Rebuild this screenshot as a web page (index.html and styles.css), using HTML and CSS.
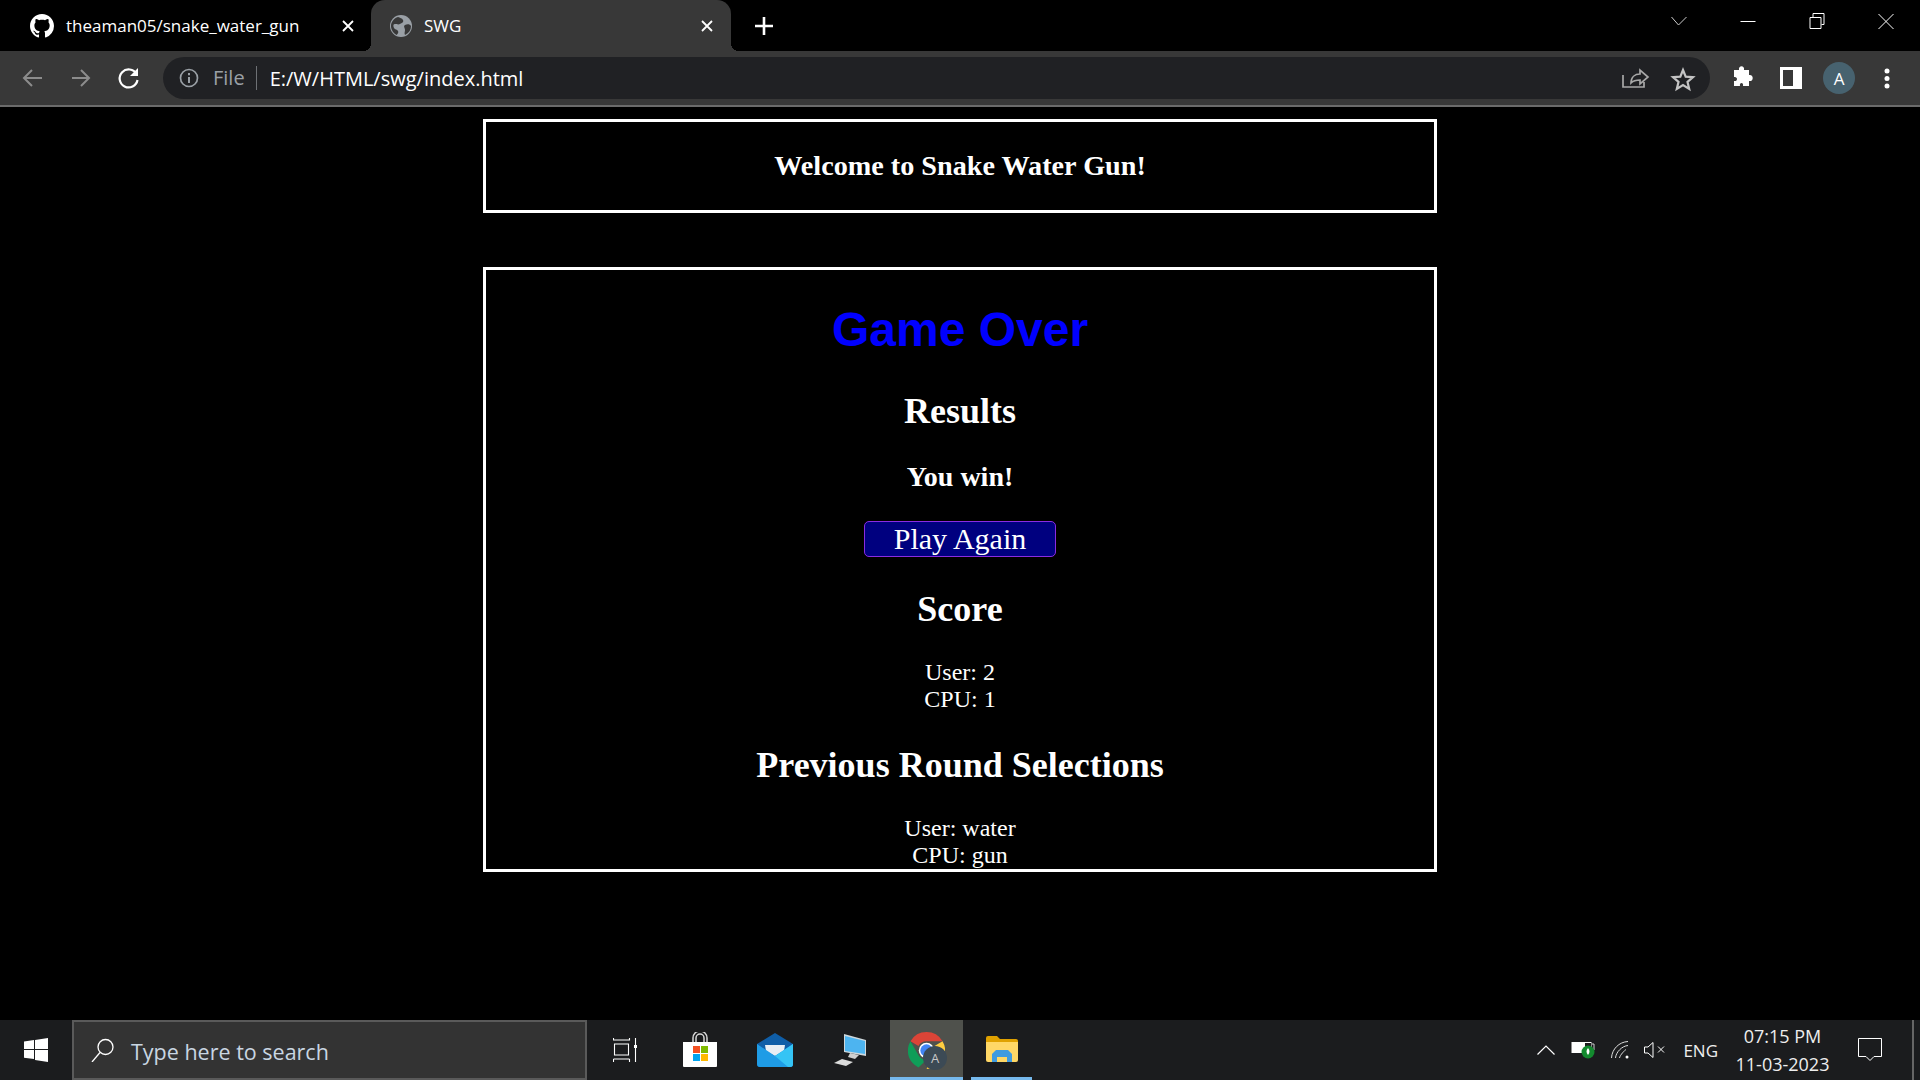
FILE: index.html
```html
<!DOCTYPE html>
<html lang="en">
<head>
    <meta charset="UTF-8">
    <meta name="viewport" content="width=device-width, initial-scale=1.0">
    <title>SWG</title>
    <link rel="stylesheet" href="styles.css">
</head>
<body>
    <div class="tab-strip">
        <div class="tab">
            <svg class="tab-favicon" viewBox="0 0 16 16"><path fill="#fff" d="M8 0C3.58 0 0 3.58 0 8c0 3.54 2.29 6.53 5.47 7.59.4.07.55-.17.55-.38 0-.19-.01-.82-.01-1.49-2.01.37-2.53-.49-2.69-.94-.09-.23-.48-.94-.82-1.13-.28-.15-.68-.52-.01-.53.63-.01 1.08.58 1.23.82.72 1.21 1.87.87 2.33.66.07-.52.28-.87.51-1.07-1.78-.2-3.64-.89-3.64-3.95 0-.87.31-1.59.82-2.15-.08-.2-.36-1.02.08-2.12 0 0 .67-.21 2.2.82.64-.18 1.32-.27 2-.27.68 0 1.36.09 2 .27 1.53-1.04 2.2-.82 2.2-.82.44 1.1.16 1.92.08 2.12.51.56.82 1.27.82 2.15 0 3.07-1.87 3.75-3.65 3.95.29.25.54.73.54 1.48 0 1.07-.01 1.93-.01 2.2 0 .21.15.46.55.38A8.013 8.013 0 0016 8c0-4.42-3.58-8-8-8z"/></svg>
            <span class="tab-title">theaman05/snake_water_gun</span>
            <svg class="tab-close" viewBox="0 0 12 12"><path d="M1 1l10 10M11 1L1 11" stroke="#fff" stroke-width="1.8"/></svg>
        </div>
        <div class="tab tab-active">
            <svg class="tab-favicon" viewBox="0 0 22 22"><circle cx="11" cy="11" r="11" fill="#9aa0a6"/><path fill="#383838" d="M8 2c2 1 4 1 5 3s-1 3-3 4-3 0-5 0-2 2-1 4 3 1 4 3-1 3-1 4C4 19 1 15 1 11 1 7 4 3 8 2zM15 10c2-1 5-1 6 1 0 4-2 7-6 9-1-2 0-3 0-5s-2-4 0-5z"/></svg>
            <span class="tab-title">SWG</span>
            <svg class="tab-close" viewBox="0 0 12 12"><path d="M1 1l10 10M11 1L1 11" stroke="#fff" stroke-width="1.8"/></svg>
        </div>
        <svg class="new-tab" viewBox="0 0 18 18"><path d="M9 0v18M0 9h18" stroke="#fff" stroke-width="2.6"/></svg>
        <div class="window-controls">
            <svg class="win-btn" viewBox="0 0 68 51"><path d="M27 17l7 8 8-8" fill="none" stroke="#ccc"/></svg>
            <svg class="win-btn" viewBox="0 0 68 51"><path d="M27 21.5h15" stroke="#fff"/></svg>
            <svg class="win-btn" viewBox="0 0 68 51"><path d="M27.5 17.5h11v11h-11zM30.5 17v-3.500h11v11H39" fill="none" stroke="#fff"/></svg>
            <svg class="win-btn" viewBox="0 0 68 51"><path d="M27 14l15 15M42 14L27 29" stroke="#fff"/></svg>
        </div>
    </div>

    <div class="toolbar">
        <svg class="tool-btn" viewBox="0 0 48 54"><path d="M40 27H23M30 19l-8 8 8 8" transform="translate(-6 0)" fill="none" stroke="#8c8c8c" stroke-width="2"/></svg>
        <svg class="tool-btn" viewBox="0 0 48 54"><path d="M16 27h16M25 19l8 8-8 8" fill="none" stroke="#8c8c8c" stroke-width="2"/></svg>
        <svg class="tool-btn" viewBox="0 0 48 54"><path d="M32.500 23a9 9 0 1 0 1 6" fill="none" stroke="#fff" stroke-width="2.200"/><path d="M34 17v8h-8z" fill="#fff"/></svg>
        <div class="omnibox">
            <svg class="info-icon" viewBox="0 0 20 20"><circle cx="10" cy="10" r="8.500" fill="none" stroke="#9aa0a6" stroke-width="1.700"/><path d="M10 9v6M10 5v2.200" stroke="#9aa0a6" stroke-width="2"/></svg>
            <span class="scheme">File</span>
            <span class="url">E:/W/HTML/swg/index.html</span>
            <svg class="omni-btn" viewBox="0 0 48 42"><path d="M12 18v12h21v-5M20 26c0-6 4-9 9-9v-4l8 7-8 7v-4c-4 0-7 1-9 3z" fill="none" stroke="#a8a8a8" stroke-width="1.700"/></svg>
            <svg class="omni-btn" viewBox="0 0 48 42"><path d="M24 13l2.700 6.600 7.300.6-5.500 4.700 1.700 7-6.200-3.800-6.200 3.800 1.700-7-5.500-4.700 7.300-.6z" fill="none" stroke="#c4c4c4" stroke-width="2.200"/></svg>
        </div>
        <svg class="tool-btn" viewBox="0 0 48 54"><path fill="#fff" d="M15 24h5c-1-5 6-5 5 0h5v5c5-1 5 7 0 6v5h-6c1-4-4-4-3 0h-6v-5c4 1 4-5 0-4z" transform="translate(0 -5)"/></svg>
        <svg class="tool-btn" viewBox="0 0 48 54"><path fill="#fff" fill-rule="evenodd" d="M13 16h22v22H13zM16 19v16h10V19z"/></svg>
        <div class="tool-avatar"><span class="avatar-circle">A</span></div>
        <svg class="tool-btn" viewBox="0 0 48 54"><circle cx="24" cy="20" r="2.500" fill="#fff"/><circle cx="24" cy="27.500" r="2.500" fill="#fff"/><circle cx="24" cy="35" r="2.500" fill="#fff"/></svg>
    </div>

    <main class="page">
        <div class="box welcome-box">
            <h2 class="welcome">Welcome to Snake Water Gun!</h2>
        </div>
        <div class="box game-box">
            <h1 class="game-over">Game Over</h1>
            <h2 class="section-title">Results</h2>
            <h3 class="result">You win!</h3>
            <button class="play-again">Play Again</button>
            <h2 class="section-title score-title">Score</h2>
            <p class="line first-line">User: 2</p>
            <p class="line">CPU: 1</p>
            <h2 class="section-title prev-title">Previous Round Selections</h2>
            <p class="line first-line">User: water</p>
            <p class="line">CPU: gun</p>
        </div>
    </main>

    <div class="taskbar">
        <div class="start">
            <svg class="start-logo" viewBox="0 0 24 24"><path fill="#fff" d="M0 3.500l10-1.400V11H0zM11 2l13-2v11H11zM0 12h10v9L0 19.700zM11 12h13v12l-13-2z"/></svg>
        </div>
        <div class="search">
            <svg class="search-icon" viewBox="0 0 24 24"><circle cx="14.500" cy="9" r="7.500" fill="none" stroke="#fff" stroke-width="1.300"/><path d="M9 14.500L1 24" stroke="#fff" stroke-width="1.300"/></svg>
            <span class="search-text">Type here to search</span>
        </div>
        <div class="task-icons">
            <div class="task-item">
                <svg class="ti-view" viewBox="0 0 24 24"><path d="M.5 2h16M.5 0v2.500M16.500 0v2.500M1.500 6h14v11h-14zM.5 21h16M.5 21v3M16.500 21v3M22.500 0v24" fill="none" stroke="#fff" stroke-width="1.100"/><rect x="21" y="7" width="3" height="3" fill="#fff"/></svg>
            </div>
            <div class="task-item">
                <svg class="ti-store" viewBox="0 0 36 36"><path d="M11 12V6a7 7 0 0 1 14 0v6M14 12V6a4 4 0 0 1 8 0v6" fill="none" stroke="#d8d8d8" stroke-width="1.500"/><path d="M1 10h34v24a1 1 0 0 1-1 1H2a1 1 0 0 1-1-1z" fill="#fff"/><rect x="11" y="14" width="7" height="7" fill="#f25022"/><rect x="19" y="14" width="7" height="7" fill="#7fba00"/><rect x="11" y="22" width="7" height="7" fill="#00a4ef"/><rect x="19" y="22" width="7" height="7" fill="#ffb900"/></svg>
            </div>
            <div class="task-item">
                <svg class="ti-mail" viewBox="0 0 36 34"><path d="M18 0l18 11v20a3 3 0 0 1-3 3H3a3 3 0 0 1-3-3V11z" fill="#0f5ea8"/><path d="M8 12h20l-1 6-9 5-9-5z" fill="#e8eef4"/><path d="M0 11l18 12 18-12v20a3 3 0 0 1-3 3H3a3 3 0 0 1-3-3z" fill="#1f9ce6"/><path d="M36 11v20a3 3 0 0 1-3 3H31L18 23z" fill="#35c4f5"/></svg>
            </div>
            <div class="task-item">
                <svg class="ti-pc" viewBox="0 0 32 32"><path d="M10 0l22 6v16l-22-4z" fill="#cfd8dc"/><path d="M11 2l20 5v13l-20-3z" fill="#4db4f0"/><path d="M16 19l9 2-4 4-7-2z" fill="#cfcfcf"/><path d="M8 25l11 3-7 4L0 29z" fill="#dcdcdc"/></svg>
            </div>
            <div class="task-item task-active">
                <svg class="ti-chrome" viewBox="0 0 48 48"><path d="M24 0a24 24 0 0 1 20.800 12H24a12 12 0 0 0-10.400 6L3.200 12A24 24 0 0 1 24 0z" fill="#db4437"/><path d="M3.200 12l10.400 18A12 12 0 0 0 24 36L13.600 46A24 24 0 0 1 3.200 12z" fill="#0f9d58"/><path d="M44.800 12A24 24 0 0 1 24 48l10.400-18a12 12 0 0 0 0-12z" fill="#ffcd40"/><circle cx="24" cy="24" r="10" fill="#fff"/><circle cx="24" cy="24" r="8" fill="#4285f4"/></svg>
                <span class="chrome-badge">A</span>
            </div>
            <div class="task-item task-open">
                <svg class="ti-folder" viewBox="0 0 32 26"><path d="M0 2a2 2 0 0 1 2-2h9l3 3h16a2 2 0 0 1 2 2v2H0z" fill="#e0a100"/><path d="M0 6h32v18a2 2 0 0 1-2 2H2a2 2 0 0 1-2-2z" fill="#ffd766"/><path d="M6 26v-8l4-4h12l4 4v8h-5v-5H11v5z" fill="#3f9be0"/></svg>
            </div>
        </div>
        <div class="tray">
            <svg class="tray-chevron" viewBox="0 0 18 10"><path d="M.5 9.500L9 1l8.500 8.500" fill="none" stroke="#fff" stroke-width="1.200"/></svg>
            <svg class="tray-battery" viewBox="0 0 24 18"><path d="M.5 1h20v11H.5z" fill="#fff"/><path d="M21 3h2v6" stroke="#ccc" fill="none"/><rect x="14" y="2" width="6" height="9" fill="#1c1c1e"/><circle cx="17" cy="11" r="6.500" fill="#138a2e"/><path d="M17 7c2 2 2 5 0 7-2-2-2-5 0-7z" fill="#fff"/></svg>
            <svg class="tray-wifi" viewBox="0 0 18 18"><path d="M.5 17C1 8 8 1 17 .5M4.500 17C5 11 11 5 17 4.500M8.500 17C9 14 14 9 15 8.500" fill="none" stroke="#ddd"/><circle cx="16" cy="16" r="1.500" fill="#fff"/></svg>
            <svg class="tray-sound" viewBox="0 0 21 16"><path d="M.5 5H4l5-4.500v15L4 11H.5z" fill="none" stroke="#fff"/><path d="M14 4.500l6 6M20 4.500l-6 6" stroke="#fff"/></svg>
            <span class="tray-lang">ENG</span>
            <div class="clock">
                <span>07:15 PM</span>
                <span>11-03-2023</span>
            </div>
            <svg class="tray-notify" viewBox="0 0 24 24"><path d="M.5.500h23v18H16l-4 4-4-4H.5z" fill="none" stroke="#fff"/></svg>
            <div class="show-desktop"></div>
        </div>
    </div>
</body>
</html>
```

FILE: styles.css
```css
html, body{
    margin: 0;
    height: 100%;
}
body{
    display: flex;
    flex-direction: column;
    width: 1920px;
    height: 1080px;
    overflow: hidden;
    background-color: #000;
    font-family: "Liberation Serif", "Times New Roman", serif;
    color: #fff;
}

/* browser tabs */
.tab-strip{
    display: flex;
    align-items: center;
    height: 51px;
    flex-shrink: 0;
    font-family: "Open Sans", sans-serif;
}
.tab{
    display: flex;
    align-items: center;
    width: 371px;
    height: 51px;
    box-sizing: border-box;
    padding: 0 17px 0 30px;
    font-size: 17px;
}
.tab-active{
    position: relative;
    width: 360px;
    padding: 0 18px 0 19px;
    background-color: #383838;
    border-radius: 14px 14px 0 0;
}
.tab-active::before,
.tab-active::after{
    content: "";
    position: absolute;
    bottom: 0;
    width: 8px;
    height: 8px;
}
.tab-active::before{
    left: -8px;
    background: radial-gradient(circle at 0 0, transparent 8px, #383838 8px);
}
.tab-active::after{
    right: -8px;
    background: radial-gradient(circle at 100% 0, transparent 8px, #383838 8px);
}
.tab-favicon{
    width: 24px;
    height: 24px;
    flex-shrink: 0;
    margin-right: 12px;
}
.tab-active .tab-favicon{
    width: 22px;
    height: 22px;
}
.tab-title{
    flex: 1;
    white-space: nowrap;
}
.tab-close{
    width: 12px;
    height: 12px;
    flex-shrink: 0;
}
.new-tab{
    width: 18px;
    height: 18px;
    margin-left: 24px;
}
.window-controls{
    display: flex;
    margin-left: auto;
    margin-right: 0;
}
.win-btn{
    display: block;
    width: 69px;
    height: 51px;
}

/* address bar */
.toolbar{
    display: flex;
    align-items: center;
    height: 54px;
    flex-shrink: 0;
    box-sizing: border-box;
    padding: 0 9px 0 8px;
    background-color: #383838;
}
.tool-btn{
    width: 48px;
    height: 54px;
    flex-shrink: 0;
}
.omnibox{
    display: flex;
    align-items: center;
    flex: 1;
    height: 42px;
    margin: 0 9px 0 11px;
    padding: 0 3px 0 16px;
    border-radius: 21px;
    background-color: #202124;
    font-family: "Open Sans", sans-serif;
    font-size: 20px;
}
.info-icon{
    width: 20px;
    height: 20px;
    margin-right: 14px;
}
.scheme{
    color: #9aa0a6;
    padding-right: 11px;
    border-right: 1px solid #6e7175;
    line-height: 24px;
}
.url{
    flex: 1;
    padding-left: 13px;
    color: #fff;
}
.omni-btn{
    width: 48px;
    height: 42px;
}
.tool-avatar{
    display: flex;
    align-items: center;
    justify-content: center;
    width: 48px;
}
.avatar-circle{
    display: flex;
    align-items: center;
    justify-content: center;
    width: 32px;
    height: 32px;
    border-radius: 50%;
    background-color: #47626f;
    font-family: "Open Sans", sans-serif;
    font-size: 17px;
}

/* page content */
.page{
    flex: 1;
    box-sizing: border-box;
    border-top: 2px solid #6b6b6b;
    padding-top: 12px;
}
.box{
    width: 954px;
    box-sizing: border-box;
    margin: 0 auto;
    border: 3px solid #fff;
    text-align: center;
}
.welcome-box{
    padding: 28px 0;
}
.game-box{
    margin-top: 54px;
    padding-top: 32px;
}
.welcome{
    margin: 0;
    font-size: 28.2px;
}
.game-over{
    margin: 0 0 34px;
    color: #00f;
    font-family: "Liberation Sans", Arial, sans-serif;
    font-size: 48px;
    line-height: 55px;
}
.section-title{
    margin: 0;
    font-size: 36px;
    line-height: 41px;
}
.result{
    margin: 29px 0 29px;
    font-size: 28px;
    line-height: 31px;
}
.play-again{
    display: block;
    width: 192px;
    height: 36px;
    margin: 0 auto;
    padding: 0;
    border: 1px solid #8a2be2;
    border-radius: 5px;
    background-color: #00007f;
    color: #fff;
    font-family: "Liberation Serif", "Times New Roman", serif;
    font-size: 30px;
}
.score-title{
    margin-top: 32px;
}
.prev-title{
    margin-top: 32px;
}
.line{
    margin: 0;
    font-size: 24px;
    line-height: 27px;
}
.first-line{
    margin-top: 29px;
}

/* windows taskbar */
.taskbar{
    display: flex;
    height: 60px;
    flex-shrink: 0;
    background-color: #1b1c1e;
    font-family: "Open Sans", sans-serif;
}
.start{
    display: flex;
    align-items: center;
    justify-content: center;
    width: 72px;
}
.start-logo{
    width: 24px;
    height: 24px;
}
.search{
    display: flex;
    align-items: center;
    width: 515px;
    box-sizing: border-box;
    border: 2px solid #5a5a5a;
    padding-left: 17px;
    background-color: #333;
}
.search-icon{
    width: 24px;
    height: 24px;
    margin-right: 16px;
}
.search-text{
    padding-top: 3px;
    color: #c9d6e2;
    font-size: 21.5px;
}
.task-icons{
    display: flex;
}
.task-item{
    position: relative;
    display: flex;
    align-items: center;
    justify-content: center;
    width: 75px;
    box-sizing: border-box;
}
.ti-view{ width: 24px; height: 24px; }
.ti-store{ width: 36px; height: 36px; }
.ti-mail{ width: 36px; height: 34px; }
.ti-pc{ width: 32px; height: 32px; }
.ti-chrome{ width: 37px; height: 37px; }
.ti-folder{ width: 32px; height: 26px; }
.task-active{
    width: 73px;
    margin-left: 3px;
    padding-top: 3px;
    background-color: #4f514c;
    border-bottom: 3px solid #76b9ed;
}
.task-open{
    margin-left: 8px;
    width: 61px;
    border-bottom: 3px solid #76b9ed;
}
.chrome-badge{
    position: absolute;
    left: 33px;
    top: 26px;
    display: flex;
    align-items: center;
    justify-content: center;
    width: 24px;
    height: 24px;
    border-radius: 50%;
    background-color: #3c4a55;
    color: #c8c8c8;
    font-size: 13px;
}
.tray{
    display: flex;
    align-items: center;
    margin-left: auto;
    color: #eee;
    font-size: 17px;
}
.tray-chevron{ width: 18px; height: 10px; margin-right: 16px; }
.tray-battery{ width: 24px; height: 18px; margin-right: 16px; }
.tray-wifi{ width: 18px; height: 18px; margin-right: 15px; }
.tray-sound{ width: 21px; height: 16px; margin-right: 18px; }
.tray-lang{ margin-right: 15px; }
.clock{
    display: flex;
    flex-direction: column;
    align-items: center;
    gap: 4px;
    width: 99px;
    font-size: 18px;
    line-height: 24px;
}
.tray-notify{
    width: 24px;
    height: 24px;
    margin: 0 30px 0 26px;
}
.show-desktop{
    align-self: stretch;
    width: 2px;
    margin-right: 6px;
    background-color: #666;
}
```
